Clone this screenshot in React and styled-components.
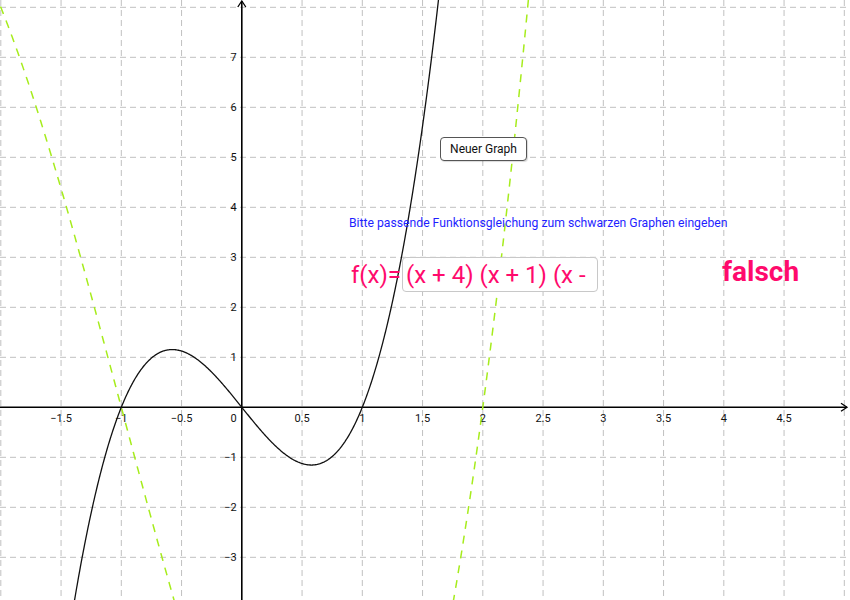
import React from 'react'
import styled, { createGlobalStyle } from 'styled-components'

const GlobalStyle = createGlobalStyle`
  html, body {
    margin: 0;
    padding: 0;
    background: #fff;
    font-family: Roboto, "Liberation Sans", sans-serif;
  }
`

// graph coordinate system
const OX = 241.8
const OY = 407.3
const UX = 120.5
const UY = 50
const px = (x) => OX + x * UX
const py = (y) => OY - y * UY

const f = (x) => 3 * x * x * x - 3 * x
const g = (x) => (x + 4) * (x + 1) * (x - 2)

const plot = (fn, from, to, step = 0.005) => {
  const pts = []
  for (let x = from; x <= to; x += step) {
    const y = py(fn(x))
    if (y < -200 || y > 800) continue
    pts.push(`${px(x).toFixed(2)},${y.toFixed(2)}`)
  }
  return 'M' + pts.join(' L')
}

const xTicks = [-1.5, -1, -0.5, 0.5, 1, 1.5, 2, 2.5, 3, 3.5, 4, 4.5]
const yTicks = [-3, -2, -1, 1, 2, 3, 4, 5, 6, 7]
const minus = (n) => (n < 0 ? '\u2212' + String(-n) : String(n))

const Canvas = styled.div`
  position: relative;
  width: 850px;
  height: 600px;
  overflow: hidden;
  background: #fff;
`

const Board = styled.svg`
  display: block;
  width: 850px;
  height: 600px;
`

const TickLabel = styled.text`
  font-family: Roboto, "Liberation Sans", sans-serif;
  font-size: 11px;
  fill: #111;
`

const NewGraphButton = styled.button`
  position: absolute;
  left: 440px;
  top: 137px;
  width: 87px;
  height: 24px;
  padding: 0;
  background: #fff;
  border: 1.5px solid #555;
  border-radius: 4px;
  box-shadow: 1px 1px 1px rgba(0, 0, 0, 0.15);
  font-family: Roboto, "Liberation Sans", sans-serif;
  font-size: 12px;
  color: #111;
  cursor: pointer;
`

const Hint = styled.div`
  position: absolute;
  left: 349px;
  top: 216px;
  font-size: 12.2px;
  color: #1f1fff;
  white-space: nowrap;
`

const FormulaRow = styled.div`
  position: absolute;
  left: 351px;
  top: 257px;
  display: flex;
  align-items: center;
  color: #ff0a6c;
  font-size: 24px;
`

const FormulaInput = styled.div`
  width: 196px;
  height: 35px;
  margin-left: 1px;
  padding-left: 3px;
  box-sizing: border-box;
  display: flex;
  align-items: center;
  background: #fff;
  border: 1px solid #c8c8c8;
  border-radius: 4px;
  white-space: nowrap;
  overflow: hidden;
`

const Verdict = styled.div`
  position: absolute;
  left: 722px;
  top: 255px;
  font-size: 28px;
  font-weight: 700;
  color: #ff0a6c;
`

const Grid = () => {
  const v = []
  for (let x = -2; x <= 5; x += 0.5) {
    if (x === 0) continue
    v.push(<line key={'v' + x} x1={px(x)} x2={px(x)} y1={0} y2={600} />)
  }
  const h = []
  for (let y = -4; y <= 8; y += 1) {
    if (y === 0) continue
    h.push(<line key={'h' + y} x1={0} x2={850} y1={py(y)} y2={py(y)} />)
  }
  return (
    <g stroke="#c0c0c0" strokeWidth="1" strokeDasharray="6 4">
      {v}
      {h}
    </g>
  )
}

const Axes = () => (
  <g stroke="#000" fill="none">
    <line x1={0} x2={847} y1={OY} y2={OY} strokeWidth="1.6" />
    <polyline points={`${841},${OY - 4} ${847},${OY} ${841},${OY + 4}`} strokeWidth="1.3" />
    <line x1={OX} x2={OX} y1={1} y2={600} strokeWidth="1.6" />
    <polyline points={`${OX - 4},${7} ${OX},${1} ${OX + 4},${7}`} strokeWidth="1.3" />
  </g>
)

const Labels = () => (
  <g>
    {xTicks.map((t) => (
      <TickLabel key={'x' + t} x={px(t)} y={OY + 15} textAnchor="middle">
        {minus(t)}
      </TickLabel>
    ))}
    <TickLabel x={OX - 5} y={OY + 15} textAnchor="end">0</TickLabel>
    {yTicks.map((t) => (
      <TickLabel key={'y' + t} x={OX - 5} y={py(t) + 4} textAnchor="end">
        {minus(t)}
      </TickLabel>
    ))}
  </g>
)

export default function App() {
  return (
    <>
      <GlobalStyle />
      <Canvas>
        <Board viewBox="0 0 850 600">
          <Grid />
          <Axes />
          <Labels />
          <path d={plot(g, -2.1, 2.5)} fill="none" stroke="#a6ec1c" strokeWidth="1.5" strokeDasharray="8 7" />
          <path d={plot(f, -1.6, 1.8)} fill="none" stroke="#111" strokeWidth="1.3" />
        </Board>
        <NewGraphButton>Neuer Graph</NewGraphButton>
        <Hint>Bitte passende Funktionsgleichung zum schwarzen Graphen eingeben</Hint>
        <FormulaRow>
          f(x)=
          <FormulaInput>(x + 4) (x + 1) (x -</FormulaInput>
        </FormulaRow>
        <Verdict>falsch</Verdict>
      </Canvas>
    </>
  )
}
